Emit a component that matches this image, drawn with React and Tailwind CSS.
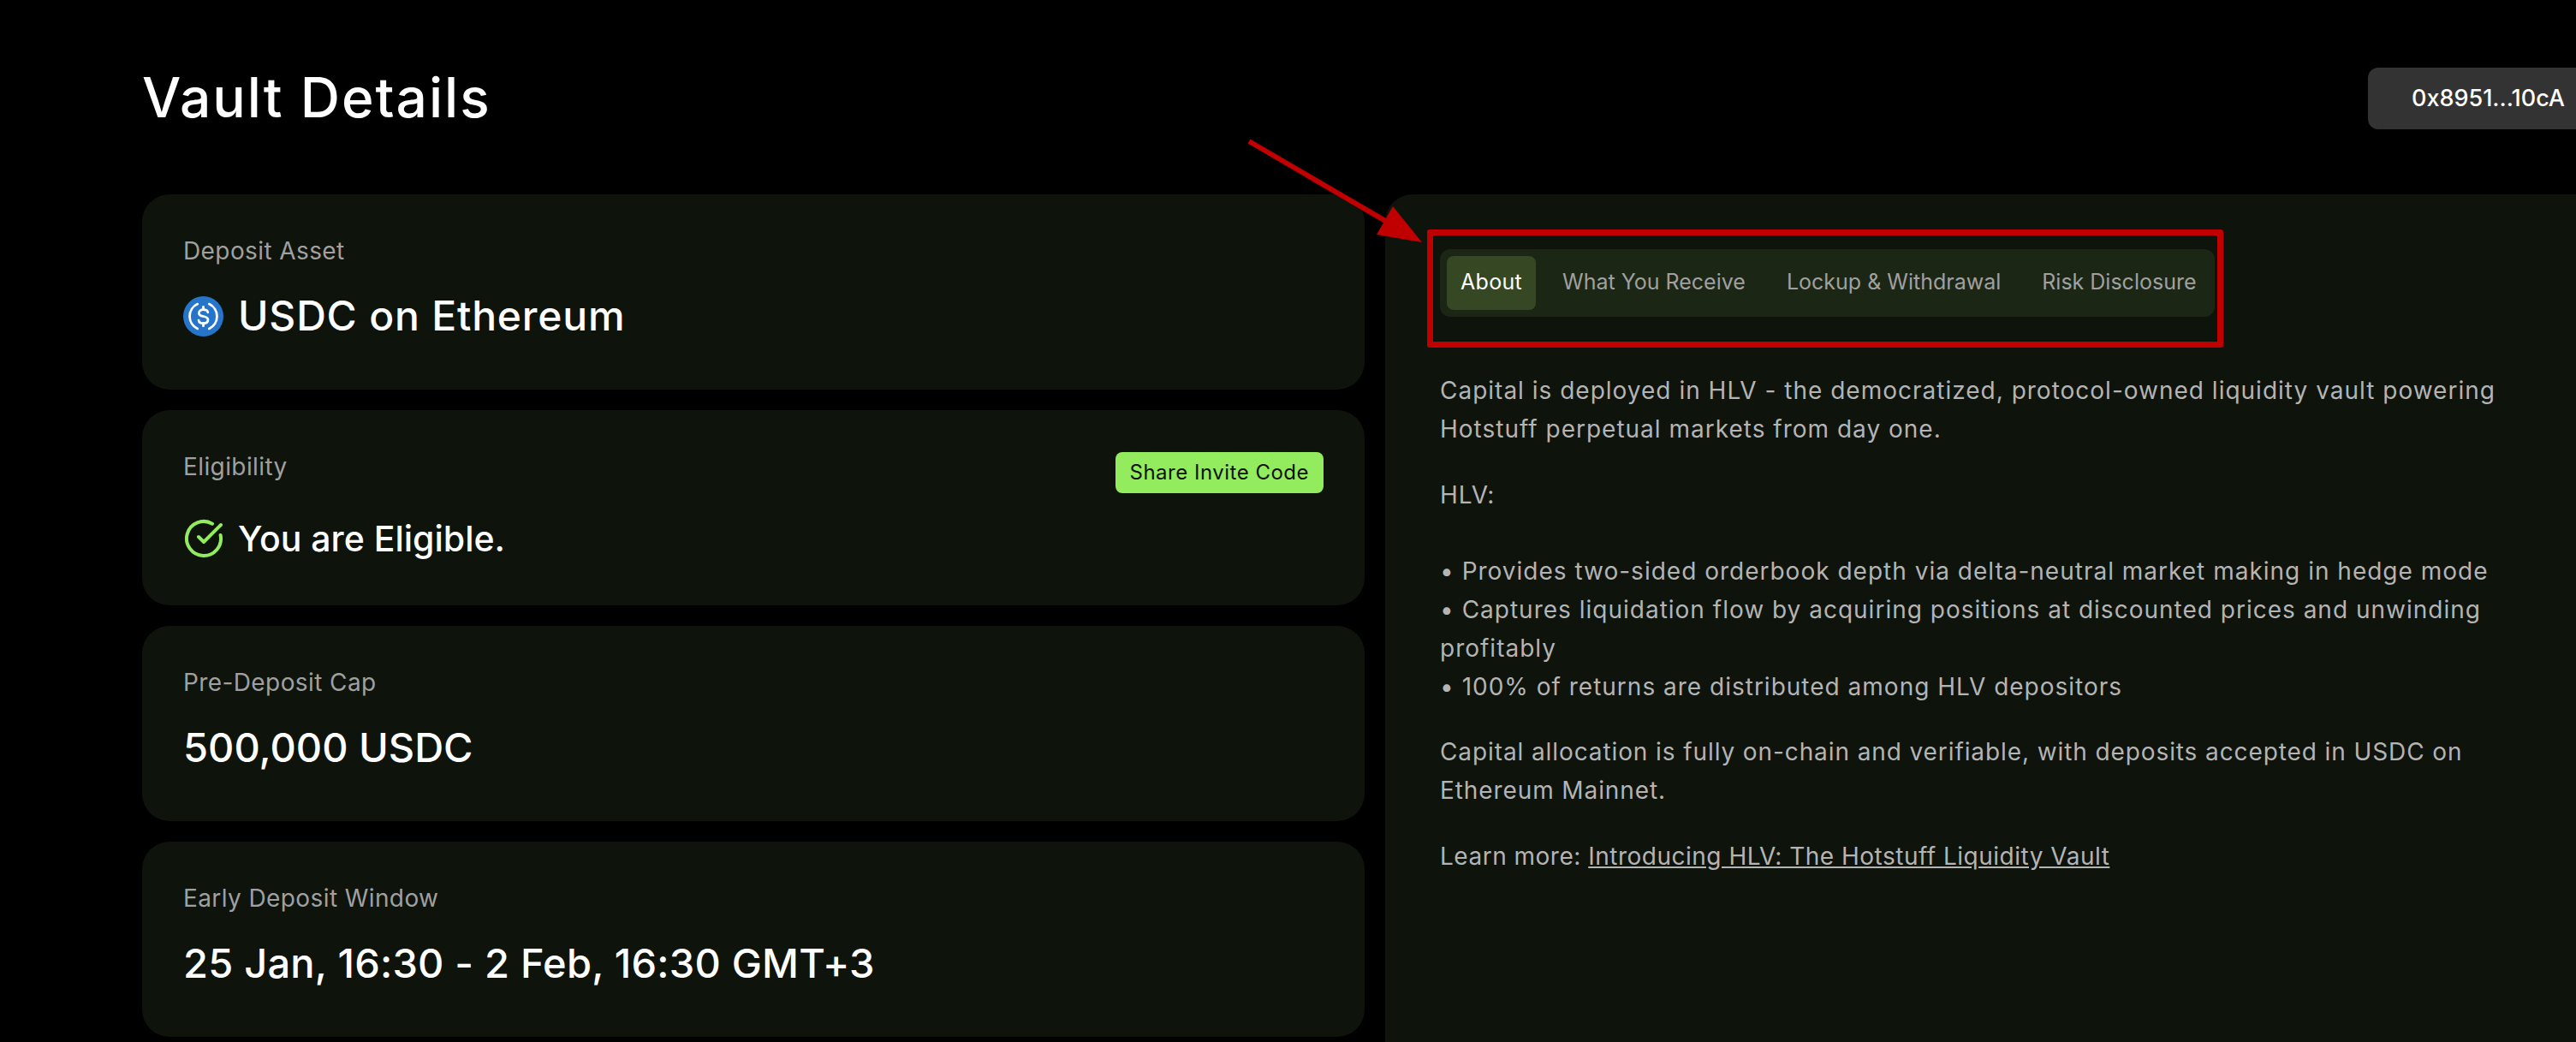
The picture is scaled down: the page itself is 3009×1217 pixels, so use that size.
import { CircleCheckBig } from 'lucide-react'

const font = { fontFamily: '"Inter", "Liberation Sans", sans-serif' }

function UsdcIcon() {
  return (
    <svg width="47" height="47" viewBox="0 0 32 32" fill="none" className="shrink-0">
      <circle cx="16" cy="16" r="16" fill="#2775ca" />
      <g stroke="#fff" strokeWidth="1.9" strokeLinecap="round">
        <path d="M11.4 6.2A10.8 10.8 0 0 0 11.4 25.800" />
        <path d="M20.600 6.2A10.8 10.8 0 0 1 20.600 25.800" />
        <path d="M19.600 12.800c-.3-1.400-1.600-2.100-3.600-2.100-2 0-3.500 1-3.500 2.700 0 1.800 1.500 2.200 3.500 2.600 2.200.4 3.700 1 3.700 2.800 0 1.800-1.600 2.800-3.700 2.800-2 0-3.400-.9-3.700-2.400" />
        <path d="M16 8.400v2.300M16 21.300v2.300" />
      </g>
    </svg>
  )
}

function InfoCard({ label, action, children }) {
  return (
    <div className="h-[228px] rounded-[32px] bg-[#0e130c] px-[48px] pt-[46px]">
      <div className="flex items-start justify-between">
        <p className="text-[28px] leading-[40px] tracking-[0.4px] text-[#a0a0a0]">{label}</p>
        {action}
      </div>
      {children}
    </div>
  )
}

const tabs = ['What You Receive', 'Lockup & Withdrawal', 'Risk Disclosure']

export default function App() {
  return (
    <div style={font} className="relative h-[1217px] w-[3009px] overflow-hidden bg-black text-white">
      {/* header */}
      <div className="flex h-[227px] items-start justify-between pl-[166px]">
        <h1 className="mt-[69px] text-[64px] leading-[90px] font-medium tracking-[2px]">Vault Details</h1>
        <div className="mt-[79px] flex h-[72px] w-[243px] shrink-0 items-center rounded-l-[12px] bg-[#333333] pl-[51px] text-[27px] font-medium">
          0x8951...10cA
        </div>
      </div>

      <div className="flex gap-[24px] pl-[166px]">
        {/* left column */}
        <div className="flex w-[1428px] shrink-0 flex-col gap-[24px]">
          <InfoCard label="Deposit Asset">
            <div className="mt-[24px] flex items-center gap-[17px]">
              <UsdcIcon />
              <span className="text-[48px] leading-[64px] font-medium tracking-[0.8px]">USDC on Ethereum</span>
            </div>
          </InfoCard>
          <InfoCard
            label="Eligibility"
            action={
              <button className="mt-[3px] h-[48px] rounded-[8px] bg-[#93ec5e] px-[17px] text-[24px] tracking-[0.5px] text-[#0e130c]">
                Share Invite Code
              </button>
            }
          >
            <div className="mt-[23px] flex items-center gap-[16px]">
              <CircleCheckBig size={48} strokeWidth={2} className="shrink-0 text-[#93ec5e]" />
              <span className="text-[41px] leading-[60px] font-medium">You are Eligible.</span>
            </div>
          </InfoCard>
          <InfoCard label="Pre-Deposit Cap">
            <p className="mt-[24px] text-[47px] leading-[64px] font-medium">500,000 USDC</p>
          </InfoCard>
          <InfoCard label="Early Deposit Window">
            <p className="mt-[24px] text-[47px] leading-[64px] font-medium tracking-[0.2px]">25 Jan, 16:30 - 2 Feb, 16:30 GMT+3</p>
          </InfoCard>
        </div>

        {/* right panel */}
        <div className="h-[1100px] flex-1 rounded-tl-[32px] bg-[#0e130c] pt-[64px] pl-[64px]">
          <div className="flex h-[79px] w-[905px] items-center gap-[14px] rounded-[12px] bg-[#1c2615] px-[8px] text-[25px] text-[#a0a0a0]">
            <div className="flex h-[63px] items-center rounded-[8px] bg-[#354723] px-[16px] pb-[2px] tracking-[0.3px] text-white">About</div>
            {tabs.map(t => (
              <div key={t} className="flex h-[63px] items-center px-[17px] pb-[2px] whitespace-nowrap">
                {t}
              </div>
            ))}
          </div>

          <div className="mt-[64px] space-y-[32px] text-[28px] leading-[44.8px] tracking-[1px] whitespace-nowrap text-[#b4b4b4]">
            <p>
              Capital is deployed in HLV - the democratized, protocol-owned liquidity vault powering<br />
              Hotstuff perpetual markets from day one.
            </p>
            <p>
              HLV:<br /><br />
              • Provides two-sided orderbook depth via delta-neutral market making in hedge mode<br />
              • Captures liquidation flow by acquiring positions at discounted prices and unwinding<br />
              profitably<br />
              • 100% of returns are distributed among HLV depositors
            </p>
            <p className="tracking-[0.9px]">
              Capital allocation is fully on-chain and verifiable, with deposits accepted in USDC on<br />
              Ethereum Mainnet.
            </p>
            <p className="tracking-[0.5px]">
              Learn more: <span className="underline">Introducing HLV: The Hotstuff Liquidity Vault</span>
            </p>
          </div>
        </div>
      </div>

      {/* red annotation over the tabs */}
      <div className="absolute top-[268px] left-[1667px] h-[138px] w-[930px] rounded-[3px] border-[7px] border-[#c00000]" />
      <svg className="absolute top-0 left-0" width="3009" height="1217" fill="none">
        <path d="M1459 165 L1620 259" stroke="#c00000" strokeWidth="6" />
        <path d="M1661 283 L1627 241 L1608 274 Z" fill="#c00000" />
      </svg>
    </div>
  )
}
